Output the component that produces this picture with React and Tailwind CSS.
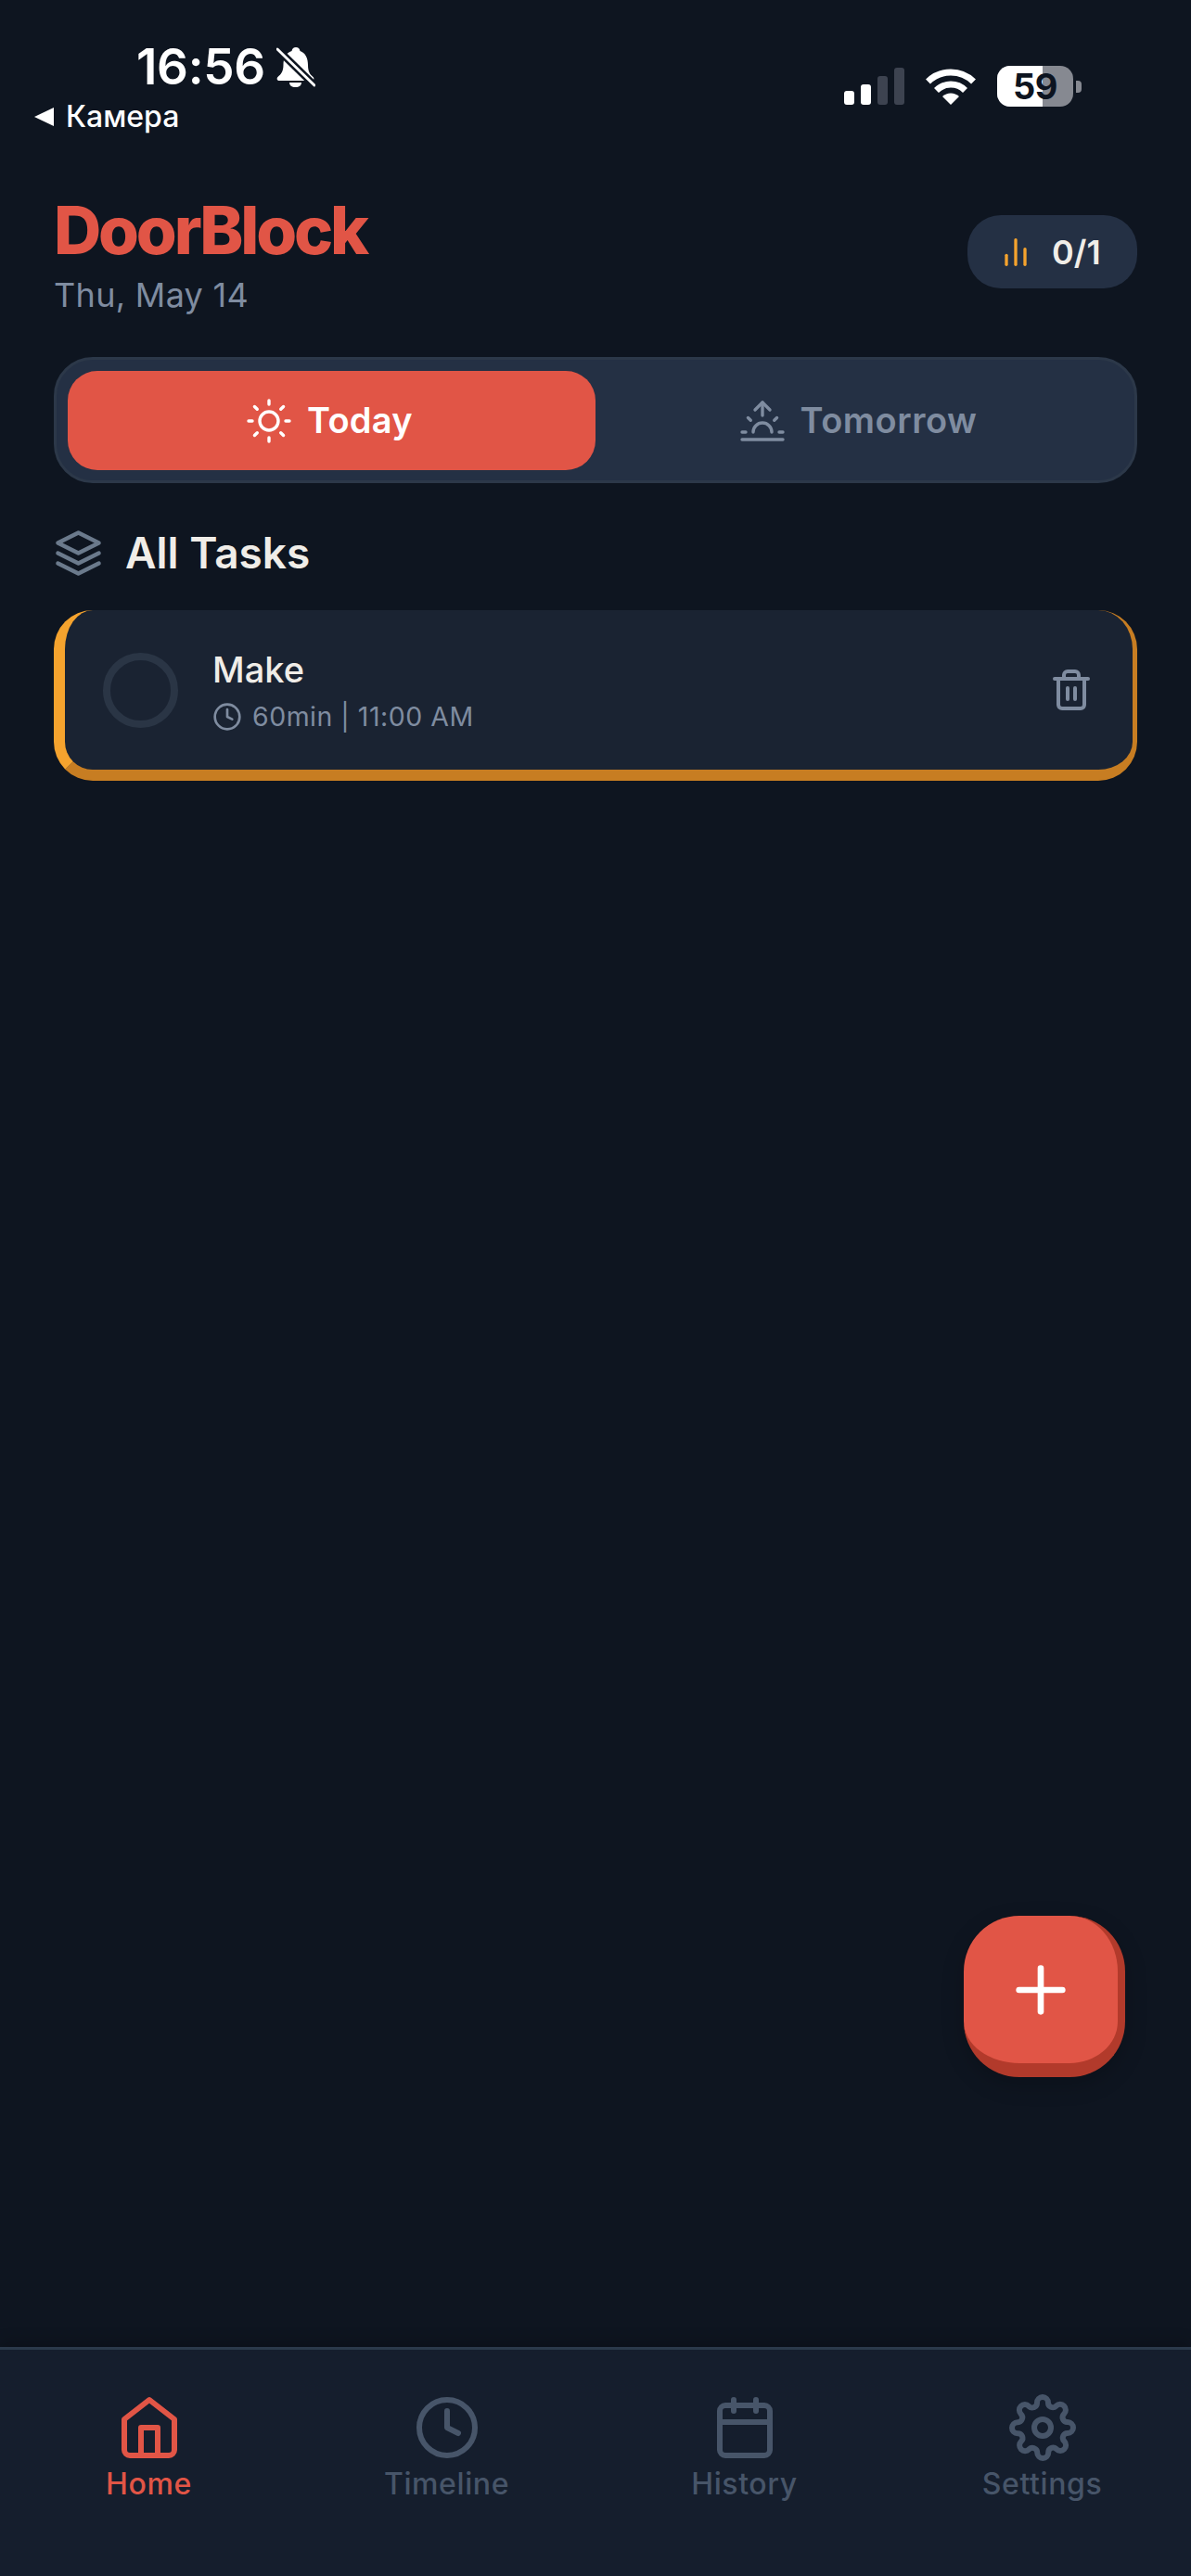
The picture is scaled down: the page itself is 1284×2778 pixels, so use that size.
import { FiBarChart2, FiCalendar, FiClock, FiHome, FiLayers, FiPlus, FiSettings, FiSun, FiSunrise, FiTrash2 } from "react-icons/fi"

const navItems = [
  { label: "Home", Icon: FiHome, active: true },
  { label: "Timeline", Icon: FiClock },
  { label: "History", Icon: FiCalendar },
  { label: "Settings", Icon: FiSettings },
]

function StatusBar() {
  return (
    <div className="flex h-[150px] shrink-0 justify-between text-white">
      <div className="pl-[37px] pt-[46px]">
        <div className="ml-[110px] flex h-[52px] items-center gap-[12px]">
          <span className="text-[53px] leading-[52px] font-semibold tracking-[-0.3px]">16:56</span>
          <svg width="42" height="43" viewBox="0 0 42 43" fill="none">
            <path d="M21 0C18.5 0 17 1.5 16.5 4C10 6 7.5 12 7.5 19C7.5 26 5 29 1.5 32C0 33.5 .5 36 3 36H38C40.5 36 41 33.5 39.5 32C36 29 34 26 34 19C34 12 31.5 6 25.5 4C25 1.5 23.5 0 21 0Z" fill="white" />
            <path d="M14 38H27C27 41 24.5 43 20.5 43C16.5 43 14 41 14 38Z" fill="white" />
            <path d="M1 2L41 41" stroke="#0e1520" strokeWidth="8" />
            <path d="M1 2L41 41" stroke="white" strokeWidth="3" strokeLinecap="round" />
          </svg>
        </div>
        <div className="mt-[16px] flex h-[24px] items-center gap-[13px]">
          <svg width="21" height="20" viewBox="0 0 21 20">
            <path d="M0 10L21 0V20Z" fill="white" />
          </svg>
          <span className="text-[32px] leading-[24px] font-medium">Камера</span>
        </div>
      </div>
      <div className="flex items-start pr-[118px] pt-[71px]">
        <div className="mt-[2px] flex h-[40px] items-end gap-[7px]">
          <div className="h-[15px] w-[11px] rounded-[3px] bg-white" />
          <div className="h-[22px] w-[11px] rounded-[3px] bg-white" />
          <div className="h-[31px] w-[11px] rounded-[3px] bg-[#3d4350]" />
          <div className="h-[40px] w-[11px] rounded-[3px] bg-[#3d4350]" />
        </div>
        <svg className="ml-[22px]" width="56" height="42" viewBox="0 0 56 42" fill="none">
          <path d="M3.5 17A35 35 0 0 1 52.5 17" stroke="white" strokeWidth="7" />
          <path d="M12.5 26.5A22 22 0 0 1 43.5 26.5" stroke="white" strokeWidth="7" />
          <path d="M28 42L19 33A13 13 0 0 1 37 33Z" fill="white" />
        </svg>
        <div className="ml-[22px] flex h-[44px] w-[82px] overflow-hidden rounded-[14px] bg-[#868991]">
          <div className="h-full w-[49px] bg-white" />
          <span className="ml-[-49px] flex h-full w-[82px] items-center justify-center text-[38px] font-bold tracking-[-0.5px] text-[#0d1420]">59</span>
        </div>
        <div className="ml-[3px] mt-[16px] h-[13px] w-[6px] rounded-r-[4px] bg-[#868991]" />
      </div>
    </div>
  )
}

function App() {
  return (
    <div className="relative flex h-[2778px] w-[1284px] flex-col overflow-hidden bg-[#0e1520] font-['Inter',sans-serif]">
      <StatusBar />

      <main className="flex-1 px-[58px]">
        <div className="flex items-start justify-between">
          <div>
            <h1 className="mt-[62px] text-[71px] leading-[72px] font-extrabold tracking-[-3.2px] text-[#e15546]">DoorBlock</h1>
            <p className="mt-[12px] text-[36px] leading-[44px] tracking-[0.3px] text-[#7f8ca0]">Thu, May 14</p>
          </div>
          <div className="mt-[82px] flex h-[79px] w-[183px] items-center gap-[19px] rounded-[36px] bg-[#243044] pl-[32px]">
            <FiBarChart2 className="text-[#f5a32e]" size={40} />
            <span className="text-[36px] font-semibold text-[#f0ede8]">0/1</span>
          </div>
        </div>

        <div className="mt-[45px] flex h-[136px] rounded-[42px] border-[3px] border-[#2c3849] bg-[#243044] p-[12px]">
          <div className="flex h-[107px] w-[569px] items-center justify-center gap-[17px] rounded-[32px] bg-[#e15546] pr-[4px] text-white">
            <FiSun size={48} strokeWidth={1.7} />
            <span className="text-[38px] font-semibold tracking-[0.3px]">Today</span>
          </div>
          <div className="flex h-[107px] flex-1 items-center justify-center gap-[17px] pr-[2px] text-[#7f8ca0]">
            <FiSunrise size={48} strokeWidth={1.7} />
            <span className="text-[38px] font-semibold tracking-[0.5px]">Tomorrow</span>
          </div>
        </div>

        <div className="mt-[48px] flex h-[54px] items-center gap-[24px]">
          <FiLayers className="text-[#6b7a8c]" size={53} />
          <h2 className="text-[46px] font-semibold text-[#f0ede8]">All Tasks</h2>
        </div>

        <div className="mt-[35px] flex h-[184px] items-center rounded-[42px] border-t-0 border-r-[5px] border-b-[12px] border-l-[12px] border-r-[#c77d22] border-b-[#c77d22] border-l-[#f5a32e] bg-[#1a2332] pl-[41px] pr-[42px]">
          <div className="h-[81px] w-[81px] rounded-full border-[8px] border-[#2a3545]" />
          <div className="ml-[37px] flex-1">
            <div className="mt-[2px] text-[38px] leading-[46px] font-medium text-[#f0ede8]">Make</div>
            <div className="mt-[10px] flex items-center gap-[11px] text-[#7f8ca0]">
              <FiClock size={32} />
              <span className="text-[28.5px] leading-[36px] tracking-[0.5px]">60min | 11:00 AM</span>
            </div>
          </div>
          <FiTrash2 className="text-[#7f8ca0]" size={48} />
        </div>
      </main>

      <button className="absolute bottom-[538px] right-[71px] flex h-[174px] w-[174px] items-center justify-center rounded-[60px] border-r-[8px] border-b-[15px] border-r-[#b23a2b] border-b-[#b23a2b] bg-[#e15546] text-white shadow-[0_8px_24px_rgba(0,0,0,0.2)]">
        <FiPlus size={80} />
      </button>

      <nav className="grid h-[247px] shrink-0 grid-cols-4 border-t-[3px] border-[#2b3a4b] bg-[#151e2d] pt-[48px] shadow-[0_-6px_14px_rgba(0,0,0,0.2)]">
        {navItems.map(({ label, Icon, active }) => (
          <div className={`flex flex-col items-center ${active ? "text-[#e15546]" : "text-[#475569]"}`} key={label}>
            <Icon size={72} />
            <span className="mt-[3px] text-[32px] leading-[44px] font-medium tracking-[0.6px]">{label}</span>
          </div>
        ))}
      </nav>
    </div>
  )
}

export default App
